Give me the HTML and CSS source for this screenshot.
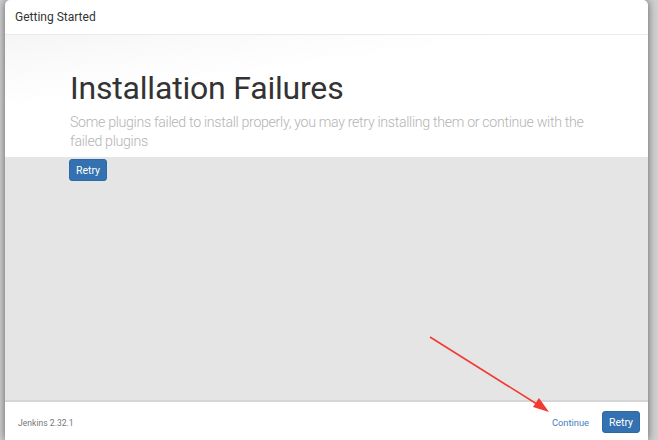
FILE: index.html
```html
<!DOCTYPE html>
<html>
<head>
<meta charset="utf-8">
<link rel="stylesheet" href="styles.css">
</head>
<body>
<div class="dialog">
  <div class="header">Getting Started</div>
  <div class="jumbo">
    <h1 class="title">Installation Failures</h1>
    <p class="lead">Some plugins failed to install properly, you may retry installing them or continue with the failed plugins</p>
  </div>
  <div class="content">
    <button class="btn">Retry</button>
  </div>
  <div class="footer">
    <span class="version">Jenkins 2.32.1</span>
    <div class="actions">
      <a class="link">Continue</a>
      <button class="btn">Retry</button>
    </div>
  </div>
  <svg class="arrow" width="658" height="440" viewBox="0 0 658 440">
    <line x1="430" y1="337" x2="540" y2="406" stroke="#f23a33" stroke-width="1.6"/>
    <polygon points="549,412 533,407 539,398" fill="#f23a33"/>
  </svg>
</div>
</body>
</html>
```
FILE: styles.css
```css
html, body {
  margin: 0;
  padding: 0;
  width: 658px;
  height: 440px;
  overflow: hidden;
  background: #d0d0d0;
}
.dialog {
  position: relative;
  margin-left: 5px;
  width: 643px;
  height: 440px;
  background: #fff;
  border-radius: 5px 5px 0 0;
  box-shadow: 0 0 9px rgba(0,0,0,0.55);
  display: flex;
  flex-direction: column;
  font-family: Roboto, "Liberation Sans", sans-serif;
}
.header {
  height: 35px;
  box-sizing: border-box;
  padding: 10px 0 0 10px;
  font-size: 12px;
  color: #333;
  border-bottom: 1px solid #eaeaea;
}
.jumbo {
  height: 122px;
  box-sizing: border-box;
  padding: 33px 0 0 65px;
  background: linear-gradient(172deg, #f5f5f5 0%, #fafafa 15%, #fff 35%);
}
.title {
  margin: 0;
  font-size: 32px;
  font-weight: 400;
  color: #333;
  line-height: 40px;
  letter-spacing: -0.2px;
}
.lead {
  margin: 5px 0 0 0;
  width: 530px;
  font-size: 14.2px;
  font-weight: 300;
  line-height: 19px;
  letter-spacing: -0.32px;
  color: #b4b4b4;
}
.content {
  flex: 1;
  background: #e5e5e5;
  padding: 2px 0 0 64px;
  border-bottom: 2px solid #d6d6d6;
}
.btn {
  display: block;
  width: 38px;
  height: 22px;
  padding: 0;
  border: 1px solid #2c6aa6;
  border-radius: 3px;
  background: #3371b0;
  color: #fff;
  font-family: Roboto, "Liberation Sans", sans-serif;
  font-size: 10.5px;
  font-weight: 400;
}
.footer {
  height: 38px;
  display: flex;
  align-items: center;
  justify-content: space-between;
  padding: 0 8px 0 13px;
}
.version {
  font-size: 8.6px;
  color: #777;
  padding-top: 4px;
}
.actions {
  display: flex;
  align-items: center;
  gap: 13px;
  padding-top: 2px;
}
.link {
  font-size: 9.3px;
  color: #437fbd;
}
.arrow {
  position: absolute;
  left: -5px;
  top: 0;
  pointer-events: none;
}
```
